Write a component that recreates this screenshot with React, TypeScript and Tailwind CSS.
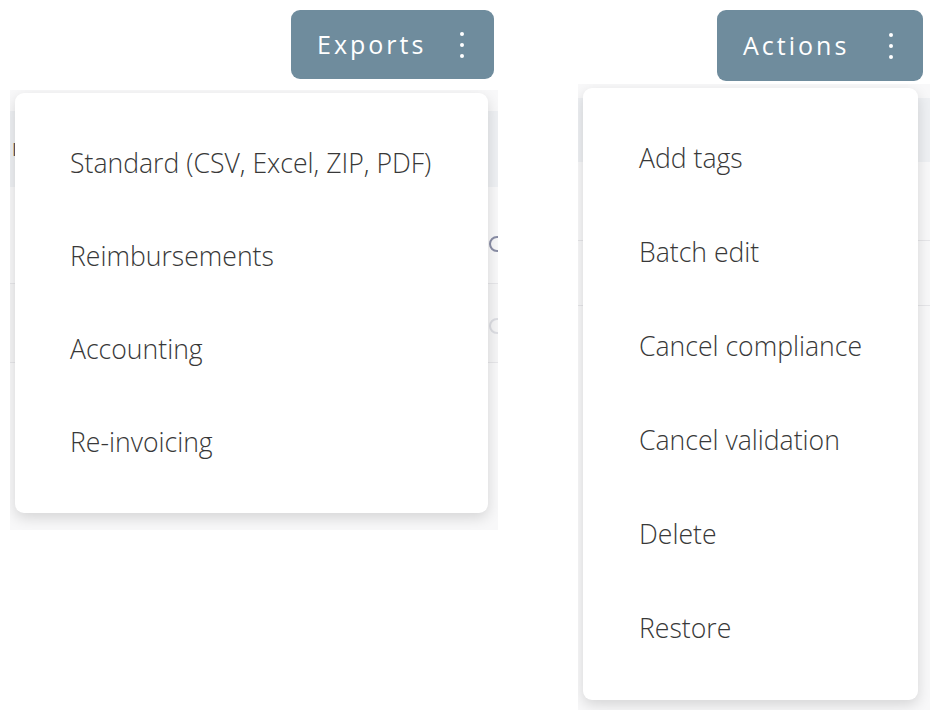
import React from "react";

const exportItems = [
    "Standard (CSV, Excel, ZIP, PDF)",
    "Reimbursements",
    "Accounting",
    "Re-invoicing",
];

const actionItems = [
    "Add tags",
    "Batch edit",
    "Cancel compliance",
    "Cancel validation",
    "Delete",
    "Restore",
];

function Kebab() {
    return (
        <span className="flex flex-col gap-[7px]">
            <span className="block h-[4px] w-[4px] rounded-full bg-white" />
            <span className="block h-[4px] w-[4px] rounded-full bg-white" />
            <span className="block h-[4px] w-[4px] rounded-full bg-white" />
        </span>
    );
}

function MenuButton({ label, className }: { label: string; className: string }) {
    return (
        <button
            className={`flex items-center justify-between rounded-[9px] bg-[#6f8c9d] pl-[26px] pr-[30px] text-[25px] tracking-[3px] text-white ${className}`}
        >
            <span>{label}</span>
            <Kebab />
        </button>
    );
}

function App() {
    return (
        <div
            className="flex h-[718px] w-[936px] bg-white text-[#383838]"
            style={{ fontFamily: '"Open Sans", "Noto Sans", sans-serif' }}
        >
            {/* Exports column */}
            <div className="ml-[10px] flex w-[488px] flex-col">
                <div className="flex justify-end pr-[4px] pt-[10px]">
                    <MenuButton label="Exports" className="h-[69px] w-[203px]" />
                </div>

                <div className="relative mt-[11px] h-[440px] overflow-hidden bg-[#f8f8f9]">
                    {/* table behind the menu */}
                    <div className="mt-[21px] flex h-[76px] items-center bg-[#eef0f3] pl-[2px] text-[18px] text-[#555]">
                        Date
                    </div>
                    <div className="relative flex h-[97px] items-center border-b border-[#e6e6e9]">
                        <span className="absolute left-[479px] top-[49px] h-[16px] w-[16px] rounded-full border-2 border-[#8a8ea6]" />
                    </div>
                    <div className="relative flex h-[79px] items-center border-b border-[#e6e6e9] bg-[#f5f5f6]">
                        <span className="absolute left-[479px] top-[34px] h-[16px] w-[16px] rounded-full border-2 border-[#dcdde2]" />
                    </div>

                    {/* dropdown */}
                    <ul className="absolute left-[5px] top-[3px] w-[473px] rounded-[9px] bg-white py-6 shadow-[0_5px_14px_rgba(0,0,0,0.14)]">
                        {exportItems.map((item) => (
                            <li key={item} className="flex h-[93px] items-center pl-[55px] text-[26.6px] font-light">
                                {item}
                            </li>
                        ))}
                    </ul>
                </div>
            </div>

            {/* Actions column */}
            <div className="ml-[80px] flex w-[352px] flex-col">
                <div className="flex justify-end pr-[7px] pt-[10px]">
                    <MenuButton label="Actions" className="h-[71px] w-[206px]" />
                </div>

                <div className="relative mt-[3px] h-[626px] overflow-hidden bg-[#f8f8f9]">
                    <div className="mt-[14px] h-[64px] bg-[#eef0f3]" />
                    <div className="h-[79px] border-b border-[#e6e6e9]" />
                    <div className="h-[65px] border-b border-[#e6e6e9]" />

                    <ul className="absolute left-[5px] top-[4px] w-[335px] rounded-[9px] bg-white py-6 shadow-[0_5px_14px_rgba(0,0,0,0.14)]">
                        {actionItems.map((item) => (
                            <li key={item} className="flex h-[94px] items-center pl-[56px] text-[26.6px] font-light">
                                {item}
                            </li>
                        ))}
                    </ul>
                </div>
            </div>
        </div>
    );
}

export default App;
